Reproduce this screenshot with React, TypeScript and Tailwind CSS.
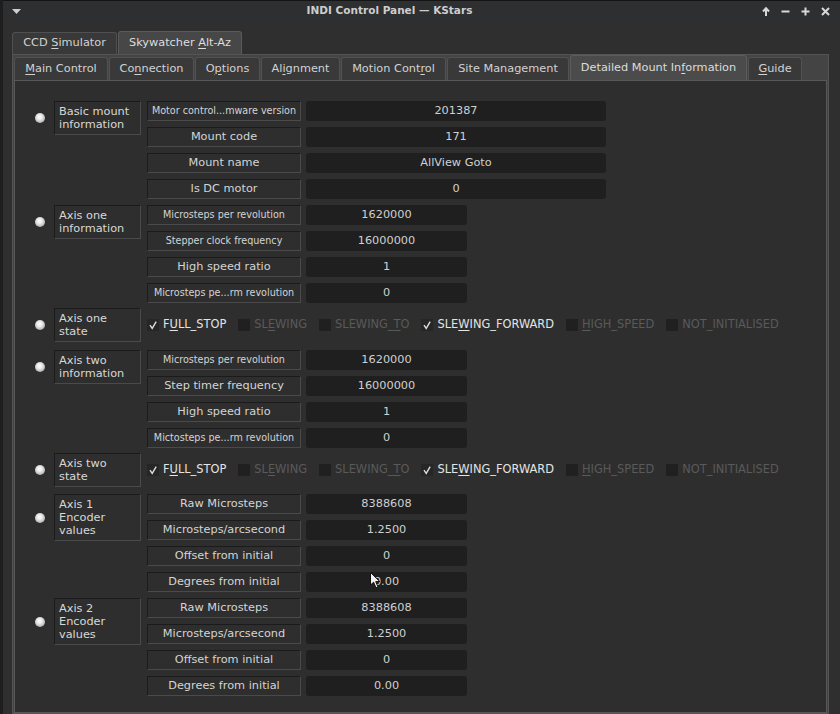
import React from "react";

function U({ c }: { c: string }) {
  return <span className="underline decoration-1 underline-offset-[2px]">{c}</span>;
}

function Led() {
  return (
    <div className="w-[10px] h-[10px] rounded-full bg-[radial-gradient(circle_at_45%_40%,#ffffff_0%,#ececec_30%,#b4b4b4_70%,#808080_100%)]" />
  );
}

function GroupLabel({ lines }: { lines: string[] }) {
  return (
    <div className="w-[87px] border border-[#1b1b1b] border-r-[#4a4a4a] border-b-[#4a4a4a] px-[4px] py-[3px] text-[11.3px] leading-[13px] text-[#d8d8d8]">
      {lines.map((l, i) => (
        <div key={i} className="whitespace-nowrap">
          {l}
        </div>
      ))}
    </div>
  );
}

type Row = { name: string; small?: boolean; value: string; wide?: boolean };

function NumRow({ r }: { r: Row }) {
  return (
    <div className="flex gap-[5px] h-[20px]">
      <div
        className={`w-[154px] h-[20px] flex items-center justify-center border border-[#1b1b1b] border-r-[#4a4a4a] border-b-[#4a4a4a] whitespace-nowrap overflow-hidden text-[#d4d4d4] ${
          r.small ? "text-[9.6px]" : "text-[11.3px]"
        }`}
      >
        <span>{r.name}</span>
      </div>
      <div
        className={`h-[20px] bg-[#1f1f1f] rounded-[3px] flex items-center justify-center text-[11.3px] text-[#d0d0d0] ${
          r.wide ? "w-[300px]" : "w-[161px]"
        }`}
      >
        <span>{r.value}</span>
      </div>
    </div>
  );
}

function Group({ label, rows }: { label: string[]; rows: Row[] }) {
  return (
    <div className="flex items-start">
      <div className="flex items-center">
        <div className="ml-[20px] mr-[9px]">
          <Led />
        </div>
        <GroupLabel lines={label} />
      </div>
      <div className="ml-[6px] flex flex-col gap-[6px]">
        {rows.map((r, i) => (
          <NumRow key={i} r={r} />
        ))}
      </div>
    </div>
  );
}

type Sw = { pre: string; u: string; post: string; on: boolean };
const switches: Sw[] = [
  { pre: "F", u: "U", post: "LL_STOP", on: true },
  { pre: "SL", u: "E", post: "WING", on: false },
  { pre: "SLEWING_", u: "T", post: "O", on: false },
  { pre: "SLE", u: "W", post: "ING_FORWARD", on: true },
  { pre: "", u: "H", post: "IGH_SPEED", on: false },
  { pre: "NOT_INITIALISED", u: "", post: "", on: false },
];

function Check({ on }: { on: boolean }) {
  return (
    <div className={`w-[12px] h-[12px] flex items-center justify-center ${on ? "bg-[#262626]" : "bg-[#202020]"}`}>
      {on && (
        <svg width="12" height="12" viewBox="0 0 12 12">
          <path d="M3 6.2 L5.2 9.4 L9.2 2.6" fill="none" stroke="#dcdcdc" strokeWidth="1.4" />
        </svg>
      )}
    </div>
  );
}

function SwitchGroup({ label, tight }: { label: string[]; tight?: boolean }) {
  return (
    <div className={`flex items-center -mt-[1px] ${tight ? "mb-[1px]" : "mb-[2px]"}`}>
      <div className="flex items-center">
        <div className="ml-[20px] mr-[9px]">
          <Led />
        </div>
        <GroupLabel lines={label} />
      </div>
      <div className="ml-[6px] flex items-center gap-[12px] h-[20px]">
        {switches.map((s, i) => (
          <div key={i} className="flex items-center gap-[4px]">
            <Check on={s.on} />
            <span className={`text-[11.4px] whitespace-nowrap ${s.on ? "text-[#e4e4e4]" : "text-[#5a5a5a]"}`}>
              {s.pre}
              {s.u && <U c={s.u} />}
              {s.post}
            </span>
          </div>
        ))}
      </div>
    </div>
  );
}

const innerTabs: { w: string; content: React.ReactNode; active?: boolean }[] = [
  { w: "w-[94px]", content: <span><U c="M" />ain Control</span> },
  { w: "w-[85px]", content: <span>Co<U c="n" />nection</span> },
  { w: "w-[65px]", content: <span>O<U c="p" />tions</span> },
  { w: "w-[79px]", content: <span>Al<U c="i" />gnment</span> },
  { w: "w-[105px]", content: <span>Motion Cont<U c="r" />ol</span> },
  { w: "w-[122px]", content: <span>Site Management</span> },
  { w: "w-[177px]", content: <span>Detailed Mount In<U c="f" />ormation</span>, active: true },
  { w: "w-[54px]", content: <span><U c="G" />uide</span> },
];

export default function App() {
  return (
    <div className="relative w-[840px] h-[714px] overflow-hidden bg-[#2f2f2f] font-['DejaVu_Sans',sans-serif] flex flex-col border-l-[3px] border-l-[#1e1e1e]">
      {/* title bar */}
      <div className="h-[21px] shrink-0 bg-[#2d2f31] border-t border-t-[#151515] flex items-center relative">
        <svg className="absolute left-[9px] top-[8px]" width="9" height="5" viewBox="0 0 9 5">
          <path d="M0 0 L9 0 L4.5 5 Z" fill="#cfcfcf" />
        </svg>
        <div className="flex-1 flex justify-center pr-[64px] text-[10.5px] font-bold text-[#cdcdcd]">
          <span>INDI Control Panel — KStars</span>
        </div>
        <div className="absolute right-[10px] top-[6px] flex items-center gap-[11px]">
          <svg width="8" height="9" viewBox="0 0 8 9">
            <path d="M4 9 V2 M1 4.5 L4 1.2 L7 4.5" fill="none" stroke="#d8d8d8" strokeWidth="2" />
          </svg>
          <svg width="9" height="9" viewBox="0 0 9 9">
            <path d="M0.5 4.5 H8.5" stroke="#d8d8d8" strokeWidth="2" />
          </svg>
          <svg width="9" height="9" viewBox="0 0 9 9">
            <path d="M0.5 4.5 H8.5 M4.5 0.5 V8.5" stroke="#d8d8d8" strokeWidth="2" />
          </svg>
          <svg width="9" height="9" viewBox="0 0 9 9">
            <path d="M1 1 L8 8 M8 1 L1 8" stroke="#d8d8d8" strokeWidth="2" />
          </svg>
        </div>
      </div>

      {/* outer tabs */}
      <div className="mt-[10px] h-[23px] shrink-0 flex items-end pl-[9px] text-[11.3px]">
        <div className="w-[105px] h-[22px] bg-[#393939] border border-b-0 border-[#505050] rounded-t-[3px] flex items-center justify-center text-[#d2d2d2]">
          <span>
            CCD <U c="S" />imulator
          </span>
        </div>
        <div className="ml-[1px] w-[124px] h-[23px] bg-[#474747] border border-b-0 border-[#5a5a5a] rounded-t-[3px] flex items-center justify-center text-[#dedede]">
          <span>
            Skywatcher <U c="A" />lt-Az
          </span>
        </div>
      </div>

      {/* outer pane */}
      <div className="ml-[9px] w-[817px] flex-1 flex flex-col border border-[#545454] bg-[#444444] pl-[1px] pr-[1px]">
        <div className="h-[25px] shrink-0 flex items-end gap-[1px] text-[11.3px]">
          {innerTabs.map((t, i) => (
            <div
              key={i}
              className={`${t.w} flex items-center justify-center rounded-t-[3px] border border-b-0 whitespace-nowrap ${
                t.active
                  ? "h-[25px] bg-[#4b4b4b] border-[#5c5c5c] text-[#dcdcdc]"
                  : "h-[23px] bg-[#393939] border-[#525252] text-[#d2d2d2]"
              }`}
            >
              {t.content}
            </div>
          ))}
        </div>
        <div className="flex-1 border border-[#585858] bg-[#2e2e2e] pt-[20px] flex flex-col gap-[6px]">
          <Group
            label={["Basic mount", "information"]}
            rows={[
              { name: "Motor control...mware version", small: true, value: "201387", wide: true },
              { name: "Mount code", value: "171", wide: true },
              { name: "Mount name", value: "AllView Goto", wide: true },
              { name: "Is DC motor", value: "0", wide: true },
            ]}
          />
          <Group
            label={["Axis one", "information"]}
            rows={[
              { name: "Microsteps per revolution", small: true, value: "1620000" },
              { name: "Stepper clock frequency", small: true, value: "16000000" },
              { name: "High speed ratio", value: "1" },
              { name: "Microsteps pe...rm revolution", small: true, value: "0" },
            ]}
          />
          <SwitchGroup label={["Axis one", "state"]} />
          <Group
            label={["Axis two", "information"]}
            rows={[
              { name: "Microsteps per revolution", small: true, value: "1620000" },
              { name: "Step timer frequency", value: "16000000" },
              { name: "High speed ratio", value: "1" },
              { name: "Mictosteps pe...rm revolution", small: true, value: "0" },
            ]}
          />
          <SwitchGroup label={["Axis two", "state"]} tight />
          <Group
            label={["Axis 1", "Encoder", "values"]}
            rows={[
              { name: "Raw Microsteps", value: "8388608" },
              { name: "Microsteps/arcsecond", value: "1.2500" },
              { name: "Offset from initial", value: "0" },
              { name: "Degrees from initial", value: "0.00" },
            ]}
          />
          <Group
            label={["Axis 2", "Encoder", "values"]}
            rows={[
              { name: "Raw Microsteps", value: "8388608" },
              { name: "Microsteps/arcsecond", value: "1.2500" },
              { name: "Offset from initial", value: "0" },
              { name: "Degrees from initial", value: "0.00" },
            ]}
          />
        </div>
      </div>

      {/* mouse cursor */}
      <svg className="absolute left-[367px] top-[572px]" width="11" height="17" viewBox="0 0 11 17">
        <path d="M0.5 0.5 L0.5 13 L3.6 10.2 L6 15.8 L8 15 L5.7 9.6 L9.8 9.6 Z" fill="#f2f2f2" stroke="#111" strokeWidth="1" strokeLinejoin="round" />
      </svg>
    </div>
  );
}
